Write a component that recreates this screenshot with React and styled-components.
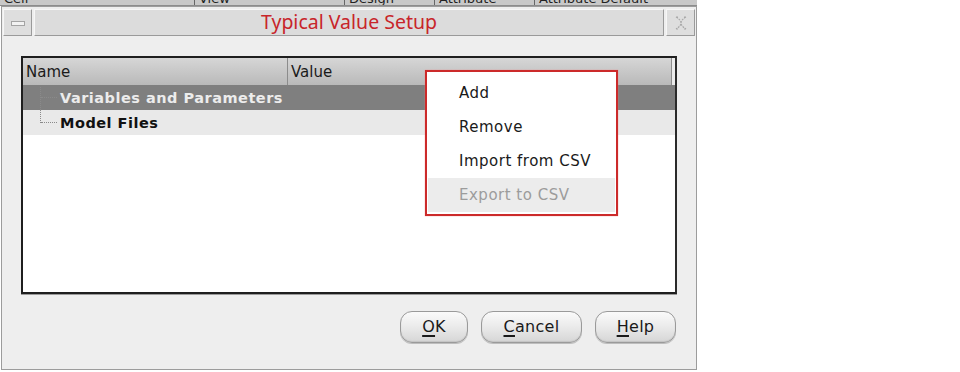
import React from "react";
import styled, { createGlobalStyle } from "styled-components";

const GlobalStyle = createGlobalStyle`
  html, body {
    margin: 0;
    padding: 0;
    background: #ffffff;
  }
  body {
    font-family: "DejaVu Sans", "Liberation Sans", sans-serif;
  }
`;

const Page = styled.div`
  width: 960px;
  height: 372px;
  overflow: hidden;
  background: #ffffff;
`;

const Backdrop = styled.div`
  display: flex;
  width: 697px;
  height: 5px;
  overflow: hidden;
  background: #c8c8c8;
  border-bottom: 1px solid #8c8c8c;
`;

const BackCell = styled.div`
  width: ${(p) => p.w}px;
  flex-shrink: 0;
  padding-left: 4px;
  border-right: 1px solid #666;
  font-size: 13px;
  line-height: 13px;
  margin-top: -8px;
  color: #222;
  white-space: nowrap;
  overflow: hidden;
`;

const Dialog = styled.div`
  position: relative;
  width: 694px;
  height: 362px;
  margin-left: 1px;
  border: 1px solid #9c9c9c;
  background: #eeeeee;
  display: flex;
  flex-direction: column;
`;

const TitleBar = styled.div`
  display: flex;
  gap: 2px;
  height: 27px;
  margin: 2px 1px 0 1px;
`;

const FrameButton = styled.div`
  width: 27px;
  flex-shrink: 0;
  background: #dedede;
  border: 1px solid;
  border-color: #f6f6f6 #9a9a9a #9a9a9a #f6f6f6;
  display: flex;
  align-items: center;
  justify-content: center;
`;

const MinGlyph = styled.div`
  width: 12px;
  height: 3px;
  border: 1px solid #a4a4a4;
  background: #f2f2f2;
  margin-top: 2px;
`;

const TitleArea = styled.div`
  flex: 1;
  background: #dcdcdc;
  border: 1px solid;
  border-color: #f6f6f6 #9a9a9a #9a9a9a #f6f6f6;
  display: flex;
  align-items: center;
  justify-content: center;
  color: #c8252a;
  font-family: "Noto Sans", "Open Sans", sans-serif;
  font-size: 19.5px;
  padding-bottom: 2px;
`;

const Body = styled.div`
  flex: 1;
  display: flex;
  flex-direction: column;
  padding: 20px 19px 0 19px;
`;

const TreePanel = styled.div`
  height: 234px;
  background: #ffffff;
  border: 2px solid #1e1e1e;
  border-right-color: #2a2a2a;
  box-shadow: 0 1px 0 #9a9a9a;
  display: flex;
  flex-direction: column;
`;

const HeaderRow = styled.div`
  display: flex;
  height: 27px;
  background: linear-gradient(#d6d6d6, #b9b9b9);
  border-right: 3px solid #ebebeb;
`;

const HeaderCell = styled.div`
  width: ${(p) => (p.w ? `${p.w}px` : "auto")};
  flex: ${(p) => (p.w ? "none" : 1)};
  padding-left: 3px;
  display: flex;
  align-items: center;
  font-size: 15px;
  color: #1a1a1a;
  border-right: 1px solid #8c8c8c;
`;

const TreeRow = styled.div`
  display: flex;
  align-items: center;
  height: 25px;
  background: ${(p) => (p.selected ? "#7f7f7f" : "#e9e9e9")};
  color: ${(p) => (p.selected ? "#ececec" : "#111")};
`;

const Branch = styled.div`
  width: 17px;
  margin-left: 17px;
  margin-right: 2px;
  position: relative;
  border-left: 1px dotted #8a8a8a;
  height: ${(p) => (p.last ? "13px" : "23px")};
  align-self: flex-start;
  margin-top: ${(p) => (p.first ? "2px" : "0")};
  &::after {
    content: "";
    position: absolute;
    left: 0;
    top: ${(p) => (p.first ? "10px" : "12px")};
    width: 16px;
    border-top: 1px dotted #8a8a8a;
  }
`;

const RowLabel = styled.span`
  font-weight: bold;
  font-size: 14.5px;
  letter-spacing: 0.5px;
`;

const ButtonRow = styled.div`
  display: flex;
  justify-content: flex-end;
  gap: 13px;
  margin-top: 17px;
  padding-right: 1px;
`;

const PushButton = styled.button`
  width: ${(p) => p.w}px;
  height: 32px;
  border-radius: 12px;
  border: 1px solid #9a9a9a;
  background: linear-gradient(#fafafa 0%, #ececec 45%, #d6d6d6 100%);
  box-shadow: inset 0 -1px 1px #c4c4c4, 0 1px 0 #bdbdbd;
  font-family: "DejaVu Sans", sans-serif;
  font-size: 16px;
  letter-spacing: 0.3px;
  color: #1a1a1a;
  padding: 0 0 2px 0;
  u {
    text-decoration-thickness: 2px;
    text-underline-offset: 3px;
  }
`;

const Menu = styled.div`
  position: absolute;
  left: 423px;
  top: 63px;
  width: 189px;
  padding: 4px 0 2px 0;
  background: #ffffff;
  border: 2px solid #cc2a2a;
  box-shadow: 0 0 1px #f08080;
  display: flex;
  flex-direction: column;
`;

const MenuItem = styled.div`
  height: 34px;
  margin: 0 1px;
  display: flex;
  align-items: center;
  padding-left: 31px;
  font-size: 15px;
  letter-spacing: 0.5px;
  color: ${(p) => (p.disabled ? "#9c9c9c" : "#1a1a1a")};
  background: ${(p) => (p.disabled ? "#ececec" : "transparent")};
`;

function CloseIcon() {
  return (
    <svg width="16" height="16" viewBox="0 0 16 16" fill="none">
      <path
        d="M3 2 Q8 5 8 8 Q8 11 3 14 M13 2 Q8 5 8 8 Q8 11 13 14 M3 2 L5 2 M3 14 L5 14 M11 2 L13 2 M11 14 L13 14"
        stroke="#a8a8a8"
        strokeWidth="1.2"
        strokeDasharray="2 1"
      />
    </svg>
  );
}

export default function App() {
  const backCols = [
    { w: 190, t: "Cell" },
    { w: 145, t: "View" },
    { w: 85, t: "Design" },
    { w: 95, t: "Attribute" },
    { w: 170, t: "Attribute Default" },
    { w: 40, t: "Sh" },
  ];

  return (
    <Page>
      <GlobalStyle />
      <Backdrop>
        {backCols.map((c) => (
          <BackCell key={c.t} w={c.w}>
            {c.t}
          </BackCell>
        ))}
      </Backdrop>
      <Dialog>
        <TitleBar>
          <FrameButton>
            <MinGlyph />
          </FrameButton>
          <TitleArea>Typical Value Setup</TitleArea>
          <FrameButton>
            <CloseIcon />
          </FrameButton>
        </TitleBar>
        <Body>
          <TreePanel>
            <HeaderRow>
              <HeaderCell w={261}>Name</HeaderCell>
              <HeaderCell>Value</HeaderCell>
            </HeaderRow>
            <TreeRow selected>
              <Branch first />
              <RowLabel>Variables and Parameters</RowLabel>
            </TreeRow>
            <TreeRow>
              <Branch last />
              <RowLabel>Model Files</RowLabel>
            </TreeRow>
          </TreePanel>
          <ButtonRow>
            <PushButton w={68}>
              <u>O</u>K
            </PushButton>
            <PushButton w={101}>
              <u>C</u>ancel
            </PushButton>
            <PushButton w={81}>
              <u>H</u>elp
            </PushButton>
          </ButtonRow>
        </Body>
        <Menu>
          <MenuItem>Add</MenuItem>
          <MenuItem>Remove</MenuItem>
          <MenuItem>Import from CSV</MenuItem>
          <MenuItem disabled>Export to CSV</MenuItem>
        </Menu>
      </Dialog>
    </Page>
  );
}
